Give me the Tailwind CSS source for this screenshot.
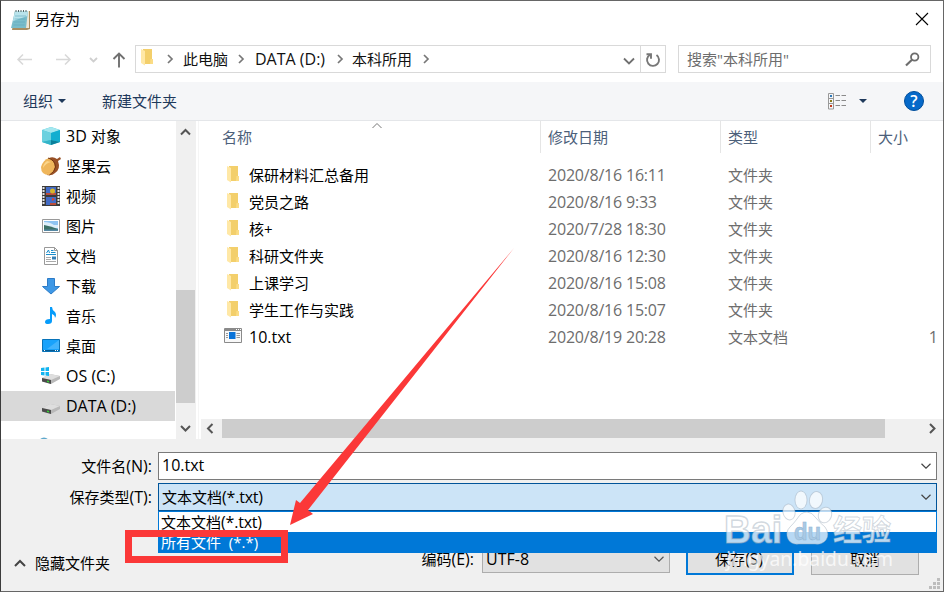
<!DOCTYPE html>
<html lang="zh-CN">
  <head>
    <meta charset="UTF-8" />
    <meta name="viewport" content="width=device-width, initial-scale=1.0" />
    <title>另存为</title>
    <script src="https://cdn.jsdelivr.net/npm/@tailwindcss/browser@4"></script>
  </head>
  <body class="w-[944px] h-[592px] overflow-hidden bg-white">
    <!-- Shared icons -->
    <svg class="hidden">
      <symbol id="folder" viewBox="0 0 14 18">
        <path d="M3 1h9v10h1v5H3z" fill="#f3cf6b" />
        <path d="M10.500 11h2.500v5h-3z" fill="#fbdc85" />
        <path d="M1 1l4 2v14.500L1 15z" fill="#ffe8a6" />
      </symbol>
      <symbol id="drive" viewBox="0 0 20 12">
        <path d="M1 5l8-4 10 2v3l-9 5-9-3z" fill="#b9b9b9" />
        <path d="M1 5l8-4 10 2-9 4z" fill="#dedede" />
        <path d="M1 5l9 2v4L1 8.500z" fill="#4b4b4b" />
        <path d="M6 7.500l2 .5v1.500L6 9z" fill="#35d335" />
      </symbol>
    </svg>

    <div
      class="relative flex flex-col w-[944px] h-[592px] border border-[#666] border-l-[#3c3c3c] bg-white font-['Open_Sans','Noto_Sans_CJK_SC',sans-serif] text-[15px] leading-5 text-black whitespace-nowrap"
    >
      <!-- Title bar -->
      <div class="flex h-[38px] items-center pl-2.5 pr-[14px]">
        <svg class="w-5 h-[22px]" viewBox="0 0 20 22">
          <path d="M4 2h15v18l-3 1H1z" fill="#a88e62" />
          <path d="M4 2h14v17H3z" fill="#eee6d5" />
          <path d="M4 2h13l-2 17H0z" fill="#79bdcb" />
          <path d="M4 2h13l-.6 5L2 12z" fill="#b9e3eb" />
          <path d="M4 7h11M3.500 10h11M3 13h11M2.500 16h11" stroke="#5faabc" stroke-width=".6" />
          <path d="M5 1v2M7.500 1v2M10 1v2M12.500 1v2M15 1v2" stroke="#566" />
        </svg>
        <span class="ml-1 mb-0.5">另存为</span>
        <svg class="ml-auto mb-0.5 w-3.5 h-3.5" viewBox="0 0 14 14" fill="none" stroke="#000" stroke-width="1.100">
          <path d="M1 1l12 12M13 1L1 13" />
        </svg>
      </div>

      <!-- Address bar -->
      <div class="flex h-[43px] items-start pt-[5px] pl-[15px]">
        <div class="flex h-[30px] w-[119px] items-center">
          <svg class="w-[119px] h-[30px]" viewBox="0 0 119 30" fill="none" stroke-width="1.500">
            <path d="M16 15.500H2M7 10.500l-5 5 5 5M40 15.500h14M49 10.500l5 5-5 5" stroke="#d8d8d8" />
            <path d="M74 14l3.500 3.500L81 14" stroke="#cfcfcf" stroke-width="1.800" />
            <path d="M103 23.500V10M97.500 15l5.500-5.500 5.500 5.500" stroke="#707070" stroke-width="1.900" />
          </svg>
        </div>
        <div class="mt-px flex h-7 w-[531px] items-center border border-[#d9d9d9] text-[#111]">
          <svg class="ml-1 mb-1 w-3.5 h-[18px]"><use href="#folder" /></svg>
          <svg class="ml-[11px] w-2.5 h-3" viewBox="0 0 10 12" fill="none" stroke="#777" stroke-width="1.700"><path d="M3 2l4 4-4 4" /></svg>
          <span class="ml-2 w-[45px]">此电脑</span>
          <svg class="ml-2 w-2.5 h-3" viewBox="0 0 10 12" fill="none" stroke="#777" stroke-width="1.700"><path d="M3 2l4 4-4 4" /></svg>
          <span class="ml-[9px] w-[72px] text-base leading-5">DATA (D:)</span>
          <svg class="ml-2 w-2.5 h-3" viewBox="0 0 10 12" fill="none" stroke="#777" stroke-width="1.700"><path d="M3 2l4 4-4 4" /></svg>
          <span class="ml-[7px] w-[60px]">本科所用</span>
          <svg class="ml-[9px] w-2.5 h-3" viewBox="0 0 10 12" fill="none" stroke="#777" stroke-width="1.700"><path d="M3 2l4 4-4 4" /></svg>
          <svg class="ml-auto mt-1 w-3 h-2" viewBox="0 0 12 8" fill="none" stroke="#707070" stroke-width="1.800"><path d="M1 1.500l5 5 5-5" /></svg>
          <div class="ml-[5px] flex h-full w-[25px] items-center justify-center border-l border-[#d9d9d9]">
            <svg class="mt-0.5 w-4 h-4" viewBox="0 0 16 16" fill="none" stroke="#777" stroke-width="1.900">
              <path d="M11.500 3a6 6 0 1 1-6.500-.3" />
              <path d="M1.500 2.200h4.500v4.500" />
            </svg>
          </div>
        </div>
        <div class="ml-3 mt-px flex h-7 w-[253px] items-center justify-between border border-[#d9d9d9] pl-2 pr-2.5 text-[#6d6d6d]">
          <span>搜索"本科所用"</span>
          <svg class="w-[15px] h-[15px]" viewBox="0 0 15 15" fill="none" stroke="#6d6d6d" stroke-width="1.800">
            <circle cx="9.700" cy="5" r="3.700" />
            <path d="M7 7.800L1 13.500" stroke-width="2.200" />
          </svg>
        </div>
      </div>

      <!-- Toolbar -->
      <div class="flex h-[39px] items-center border-b border-[#e4e6e9] bg-[#f5f6f8] pl-[22px] text-[#1e395b]">
        <span>组织</span>
        <svg class="ml-[5px] w-2 h-1" viewBox="0 0 8 4"><path d="M0 0h8L4 4z" fill="#1e395b" /></svg>
        <span class="ml-9">新建文件夹</span>
        <svg class="ml-auto w-[19px] h-[17px]" viewBox="0 0 19 17" fill="none">
          <path d="M.5.500h5v15.500h-5zM.5 5.500h5M.5 10.500h5" stroke="#999" />
          <path d="M7.500 2.500H12M13.500 2.500H18M7.500 7.500H12M13.500 7.500H18M7.500 12.500H12M13.500 12.500H18" stroke="#8a8a8a" />
          <path d="M2 3h2" stroke="#2d78b8" stroke-width="2" />
          <path d="M2 8h2" stroke="#877a18" stroke-width="2" />
          <path d="M2 13h2" stroke="#c1391b" stroke-width="2" />
        </svg>
        <svg class="ml-3 w-2 h-1" viewBox="0 0 8 4"><path d="M0 0h8L4 4z" fill="#1e395b" /></svg>
        <div class="ml-[37px] mr-[19px] flex h-5 w-5 items-center justify-center rounded-full border border-[#004e9c] bg-[#0669c9] text-base leading-5 font-semibold text-white">?</div>
      </div>

      <!-- Navigation tree and file list -->
      <div class="flex h-[318px]">
        <div class="h-full w-[174px] overflow-hidden">
          <div class="flex h-[30px] items-center pl-10">
            <svg class="w-5 h-5" viewBox="0 0 20 20">
              <path d="M1 4l9-3 9 3v12l-9 3-9-3z" fill="#3cc3d8" />
              <path d="M1 4l9-3 9 3-9 3z" fill="#a5e7ef" />
              <path d="M1 4l9 3v7l-9 2z" fill="#6bd1df" />
              <path d="M10 7l9-3v12l-9-2z" fill="#14aed0" />
              <path d="M1 16l9-2v5z" fill="#35b4c8" />
              <path d="M10 14l9 2-9 3z" fill="#0b809b" />
            </svg>
            <span class="ml-[5px]"><span class="text-base leading-5">3D </span>对象</span>
          </div>
          <div class="flex h-[30px] items-center pl-10">
            <svg class="w-5 h-5" viewBox="0 0 20 20">
              <path d="M8 2q4-2 8 1l3-2 1 2-3 2q3 8-3 12-3 3-8 2z" fill="#985026" />
              <path d="M8 2q6 3 6 9-1 6-6 8-8 0-8-8 2-7 8-9z" fill="#efb65b" />
              <path d="M6 5q-4 3-4 7 3-5 8-6z" fill="#fbd68c" />
              <path d="M7 2q7 2 7.500 9-1 5-6 8" fill="none" stroke="#74340f" />
            </svg>
            <span class="ml-[5px]">坚果云</span>
          </div>
          <div class="flex h-[30px] items-center pl-10">
            <svg class="w-5 h-5" viewBox="0 0 20 20">
              <path d="M1 0h18v20H1z" fill="#3b3b3b" />
              <path d="M2.500 1v18M17.500 1v18" stroke="#e3e3e3" stroke-width="2" stroke-dasharray="2 1" />
              <path d="M5 1h10v8H5zM5 11h10v8H5z" fill="#426bc5" />
              <path d="M5 7h10v2H5zM9 17h6v2H9z" fill="#bb4d39" />
              <circle cx="11.500" cy="5" r="2.500" fill="#d6b52b" />
              <path d="M11 12l3 1-3 2z" fill="#e43f26" />
            </svg>
            <span class="ml-[5px]">视频</span>
          </div>
          <div class="flex h-[30px] items-center pl-10">
            <svg class="w-5 h-5" viewBox="0 0 20 20">
              <path d="M1.500 3.500h17v13h-17z" fill="#fff" stroke="#999" />
              <path d="M3 5h14v10H3z" fill="#8ec4f2" />
              <path d="M3 6q6 0 10 3l4 0v3H3z" fill="#dceefa" />
              <path d="M3 9q6 1 14 4v2H3z" fill="#3c7168" />
              <path d="M3 13.500h14V15H3z" fill="#5588a4" />
            </svg>
            <span class="ml-[5px]">图片</span>
          </div>
          <div class="flex h-[30px] items-center pl-10">
            <svg class="w-5 h-5" viewBox="0 0 20 20" fill="none">
              <path d="M3.500 1.500h10l3 3v14h-13z" fill="#fff" stroke="#999" />
              <path d="M13.500 1.500v3h3" stroke="#999" />
              <path d="M5.500 7l2-3 1 3M10 4.500h2.500M10 6.500h4.500M5 8.500h10" stroke="#1b8dcc" />
              <path d="M5 11.500h5M5 13.500h5M5 15.500h10" stroke="#aaa" />
              <path d="M11 10.500h4v3h-4z" fill="#347fb6" />
            </svg>
            <span class="ml-[5px]">文档</span>
          </div>
          <div class="flex h-[30px] items-center pl-10">
            <svg class="w-5 h-5" viewBox="0 0 20 20">
              <path d="M6.500 2.500h7v8h5L10 18 1.500 10.500h5z" fill="#3e98e6" stroke="#2c7bc7" />
            </svg>
            <span class="ml-[5px]">下载</span>
          </div>
          <div class="flex h-[30px] items-center pl-10">
            <svg class="w-5 h-5" viewBox="0 0 20 20">
              <path d="M9 1h2q0 3 3 5 2 3 0 6 0-3-3-4v7q0 3-4 3-3 0-3-2 0-3 5-3z" fill="#079cfa" />
            </svg>
            <span class="ml-[5px]">音乐</span>
          </div>
          <div class="flex h-[30px] items-center pl-10">
            <svg class="w-5 h-5" viewBox="0 0 20 20">
              <path d="M1.500 3.500h17v12h-17z" fill="#18a2fb" stroke="#0873b9" />
              <path d="M18 4v9L6 13z" fill="#41b3fc" />
              <path d="M2 14.500h16" stroke="#075a91" />
              <path d="M3 14.500h1M14 14.500h1M16 14.500h1" stroke="#fff" />
            </svg>
            <span class="ml-[5px]">桌面</span>
          </div>
          <div class="flex h-[30px] items-center pl-10">
            <svg class="w-5 h-5" viewBox="0 0 20 20">
              <use href="#drive" y="7" width="20" height="12" />
              <path d="M0 2l3.500-.5V5H0zM4.500 1.500L8 1v4H4.500zM0 6h3.500v3.500L0 9zM4.500 6H8v4l-3.500-.5z" fill="#12b4f0" />
            </svg>
            <span class="ml-[5px] text-base leading-5">OS (C:)</span>
          </div>
          <div class="flex h-[30px] items-center bg-[#d9d9d9] pl-10">
            <svg class="w-5 h-5" viewBox="0 0 20 20"><use href="#drive" y="7" width="20" height="12" /></svg>
            <span class="ml-[5px] text-base leading-5">DATA (D:)</span>
          </div>
          <!-- next entry, cut off by the panel edge -->
          <div class="flex h-[30px] items-start pl-[37px] pt-4">
            <svg class="w-3 h-3" viewBox="0 0 12 12"><circle cx="6" cy="6" r="5.500" fill="#5fa8cc" /></svg>
          </div>
        </div>

        <!-- Vertical scrollbar -->
        <div class="ml-px flex h-full w-5 flex-col bg-[#f0f0f0]">
          <svg class="h-[21px] w-[19px]" viewBox="0 0 19 21" fill="none" stroke="#555" stroke-width="2"><path d="M5 13.500L9.500 9l4.500 4.500" /></svg>
          <div class="mt-[148px] h-[113px] w-[19px] bg-[#cdcdcd]"></div>
          <svg class="mt-auto h-[21px] w-[19px]" viewBox="0 0 19 21" fill="none" stroke="#555" stroke-width="2"><path d="M5 8l4.500 4.500L14 8" /></svg>
        </div>
        <div class="ml-0.5 mr-0.5 w-px bg-[#f5f5f5]"></div>

        <!-- File list -->
        <div class="relative flex min-w-0 flex-1 flex-col">
          <div class="flex h-8 items-center text-[#4c607a]">
            <span class="w-[339px] pl-[21px]">名称</span>
            <span class="flex h-full w-[180px] items-center border-l border-[#e5e5e5] pl-[7px]">修改日期</span>
            <span class="flex h-full w-[150px] items-center border-l border-[#e5e5e5] pl-[7px]">类型</span>
            <span class="flex h-full flex-1 items-center border-l border-[#e5e5e5] pl-[7px]">大小</span>
          </div>
          <svg class="absolute left-[171px] top-0.5 w-2.5 h-1.5" viewBox="0 0 10 6" fill="none" stroke="#777"><path d="M.5 5L5 .5 9.500 5" /></svg>

          <div id="files" class="mt-2"></div>

          <!-- Horizontal scrollbar -->
          <div class="mt-auto flex h-5 bg-[#f0f0f0]">
            <svg class="h-5 w-[21px]" viewBox="0 0 21 20" fill="none" stroke="#555" stroke-width="2"><path d="M11.500 5L7 9.500l4.500 4.500" /></svg>
            <div class="h-[19px] w-[663px] bg-[#cdcdcd]"></div>
            <svg class="ml-auto h-5 w-[22px]" viewBox="0 0 22 20" fill="none" stroke="#555" stroke-width="2"><path d="M9 5l4.500 4.500L9 14" /></svg>
          </div>
        </div>
      </div>

      <!-- Save form -->
      <div class="flex flex-1 flex-col bg-[#f0f0f0] pt-[13px] pr-1.5">
        <div class="flex h-7 items-center">
          <span class="w-[157px] pr-1.5 text-right">文件名<span class="text-base leading-5">(N):</span></span>
          <div class="flex h-7 flex-1 items-center justify-between border border-[#7a7a7a] bg-white pl-[3px] pr-[5px]">
            <span class="mb-0.5 text-base leading-5">10.txt</span>
            <svg class="w-2.5 h-1.5" viewBox="0 0 10 6" fill="none" stroke="#444" stroke-width="1.200"><path d="M.5.800L5 5.200 9.500.8" /></svg>
          </div>
        </div>
        <div class="mt-[3px] flex h-7 items-center">
          <span class="w-[157px] pr-1.5 text-right">保存类型<span class="text-base leading-5">(T):</span></span>
          <div class="flex h-7 flex-1 items-center justify-between border border-[#005499] bg-[#cce4f7] pl-[3px] pr-[5px]">
            <span>文本文档<span class="text-base leading-5 tracking-[-0.2px]">(*.txt)</span></span>
            <svg class="w-2.5 h-1.5" viewBox="0 0 10 6" fill="none" stroke="#444" stroke-width="1.200"><path d="M.5.800L5 5.200 9.500.8" /></svg>
          </div>
        </div>
        <div class="mt-[34px] flex h-[30px] items-center">
          <svg class="ml-[13px] mt-1.5 w-3 h-2" viewBox="0 0 12 8" fill="none" stroke="#444" stroke-width="2"><path d="M1 7l5-5 5 5" /></svg>
          <span class="ml-[9px] mt-1.5 w-[75px]">隐藏文件夹</span>
          <span class="ml-auto mb-0.5">编码<span class="text-base leading-5">(E):</span></span>
          <div class="ml-2 mb-0.5 flex h-7 w-[188px] items-center justify-between border border-[#adadad] bg-[#e1e1e1] pl-[3px] pr-[5px]">
            <span class="text-base leading-5">UTF-8</span>
            <svg class="w-2.5 h-1.5" viewBox="0 0 10 6" fill="none" stroke="#555" stroke-width="1.200"><path d="M.5.800L5 5.200 9.500.8" /></svg>
          </div>
          <div class="ml-4 flex h-[30px] w-[108px] items-center justify-center border-2 border-[#0078d7] bg-[#e1e1e1] pb-0.5 pr-0.5">保存<span class="text-base leading-5">(S)</span></div>
          <div class="ml-[17px] mr-[18px] flex h-[30px] w-[108px] items-center justify-center border border-[#adadad] bg-[#e1e1e1] pb-0.5">取消</div>
        </div>
      </div>

      <!-- Resize grip -->
      <svg class="absolute bottom-0.5 right-[3px] w-[11px] h-[11px]" viewBox="0 0 11 11" fill="#bdbdbd">
        <path d="M8 0h3v3H8zM4 4h3v3H4zM8 4h3v3H8zM0 8h3v3H0zM4 8h3v3H4zM8 8h3v3H8z" />
      </svg>

      <!-- Open file type menu -->
      <div class="absolute left-[157px] top-[510px] w-[779px] border border-b-0 border-[#0078d7] bg-white">
        <div class="h-5 pl-0.5 leading-5">文本文档<span class="text-base leading-5 tracking-[-0.2px]">(*.txt)</span></div>
        <div class="-mx-px h-[21px] bg-[#0078d7] pl-[3px] leading-5 text-white">所有文件&nbsp; (*.*)</div>
      </div>

      <!-- Highlight box and arrow -->
      <div class="absolute left-[124px] top-[529px] h-[33px] w-[163px] border-7 border-[#fb3838]"></div>
      <svg class="absolute -left-px -top-px w-[944px] h-[592px]" viewBox="0 0 944 592">
        <path d="M514 248L308 510l5 4-23 11 6-25 4 3z" fill="#fb3838" />
      </svg>

      <!-- Watermark -->
      <svg class="absolute left-[719px] top-[484px] w-[180px] h-[96px]" viewBox="720 485 180 96">
        <g fill="#fff" fill-opacity=".72" stroke="#9aa9b7" stroke-opacity=".45">
          <ellipse cx="789" cy="512" rx="6" ry="8" transform="rotate(-12 789 512)" />
          <ellipse cx="801" cy="500" rx="6" ry="9" />
          <ellipse cx="816" cy="500" rx="6.500" ry="8.500" transform="rotate(12 816 500)" />
          <ellipse cx="825" cy="515" rx="6.500" ry="8" transform="rotate(20 825 515)" />
          <path d="M807 512q5 0 9 6 4 5 9 9 5 7 1 13-4 5-11 4h-16q-8 1-11-5-3-7 2-12 4-4 7-8 4-7 10-7z" />
          <text x="724" y="543" textLength="58" lengthAdjust="spacingAndGlyphs" font-family="Liberation Sans" font-weight="700" font-size="39" stroke-width="1.500">Bai</text>
          <text x="833" y="541" textLength="58" lengthAdjust="spacingAndGlyphs" font-family="Noto Sans CJK SC" font-weight="700" font-size="29">经验</text>
        </g>
        <text x="794" y="540" textLength="27" lengthAdjust="spacingAndGlyphs" font-family="Liberation Sans" font-weight="700" font-size="24" fill="#a9c9e4" stroke="#8fb3d2" stroke-width=".5">du</text>
        <text x="726" y="566" textLength="167" lengthAdjust="spacingAndGlyphs" font-family="Noto Sans" font-size="20" fill="#fff" fill-opacity=".75">jingyan.baidu.com</text>
      </svg>
    </div>

    <script>
      const files = [
        ["保研材料汇总备用", "2020/8/16 16:11", "文件夹", ""],
        ["党员之路", "2020/8/16 9:33", "文件夹", ""],
        ["核+", "2020/7/28 18:30", "文件夹", ""],
        ["科研文件夹", "2020/8/16 12:30", "文件夹", ""],
        ["上课学习", "2020/8/16 15:08", "文件夹", ""],
        ["学生工作与实践", "2020/8/16 15:07", "文件夹", ""],
        ["10.txt", "2020/8/19 20:28", "文本文档", "1"],
      ];

      const folderIcon = `<svg class="ml-[2px] mr-[9px] mb-0.5 w-3.5 h-[18px]"><use href="#folder" /></svg>`;
      const textIcon = `<svg class="mr-[7px] mb-0.5 w-[18px] h-[15px]" viewBox="0 0 18 15" fill="none">
        <path d="M.5.500h17v14H.5z" fill="#f8f8f8" stroke="#8a8a8a" />
        <path d="M1 2h16" stroke="#8a8a8a" stroke-width="2" />
        <path d="M12 1.500h1M14 1.500h1M16 1.500h1" stroke="#fff" />
        <path d="M2 5.500h2M2 7.500h2M2 9.500h2M12.500 5.500H16M12.500 7.500H16M12.500 9.500H16" stroke="#999" />
        <path d="M5 4h6.500v7H5z" fill="#0a73d8" />
      </svg>`;

      document.getElementById("files").innerHTML = files
        .map(
          ([name, date, type, size]) => `
        <div class="flex h-[27px] items-center text-[#6d6d6d]">
          <div class="flex w-[347px] items-center pl-[23px] text-black">${size ? textIcon : folderIcon}<span class="${size ? "text-base leading-5" : ""}">${name}</span></div>
          <span class="w-[180px] text-base leading-5 tracking-[-0.2px]">${date}</span>
          <span class="flex-1">${type}</span>
          <span class="pr-[5px] text-base leading-5">${size}</span>
        </div>`
        )
        .join("");
    </script>
  </body>
</html>
